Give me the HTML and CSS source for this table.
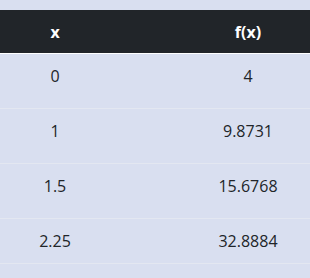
FILE: index.html
```html
<!DOCTYPE html>
<html>
<head>
<meta charset="utf-8">
<link rel="stylesheet" href="styles.css">
</head>
<body>
<table class="values">
  <colgroup><col class="col-x"><col class="col-f"></colgroup>
  <thead>
    <tr><th>x</th><th>f(x)</th></tr>
  </thead>
  <tbody>
    <tr class="tall"><td>0</td><td>4</td></tr>
    <tr class="tall"><td>1</td><td>9.8731</td></tr>
    <tr class="tall"><td>1.5</td><td>15.6768</td></tr>
    <tr><td>2.25</td><td>32.8884</td></tr>
  </tbody>
</table>
</body>
</html>
```
FILE: styles.css
```css
html, body {
  margin: 0;
  padding: 0;
  background: #d9dff0;
}
body {
  padding-top: 10px;
  font-family: "Open Sans", "Noto Sans", sans-serif;
  font-size: 16px;
  line-height: 24px;
  color: #212529;
}
.values {
  border-collapse: collapse;
  table-layout: fixed;
  width: 100%;
}
.col-x { width: 110px; }
.values th,
.values td {
  text-align: center;
  padding: 10px 0 10px;
}
.values th + th,
.values td + td {
  padding-left: 76px;
}
.values th {
  background: #212529;
  color: #ffffff;
  font-weight: 700;
  padding-bottom: 9px;
  border-bottom: 1px solid #ffffff;
}
.values td {
  border-bottom: 1px solid #e3e7f1;
}
.values tr.tall td {
  padding-bottom: 20px;
}
```
